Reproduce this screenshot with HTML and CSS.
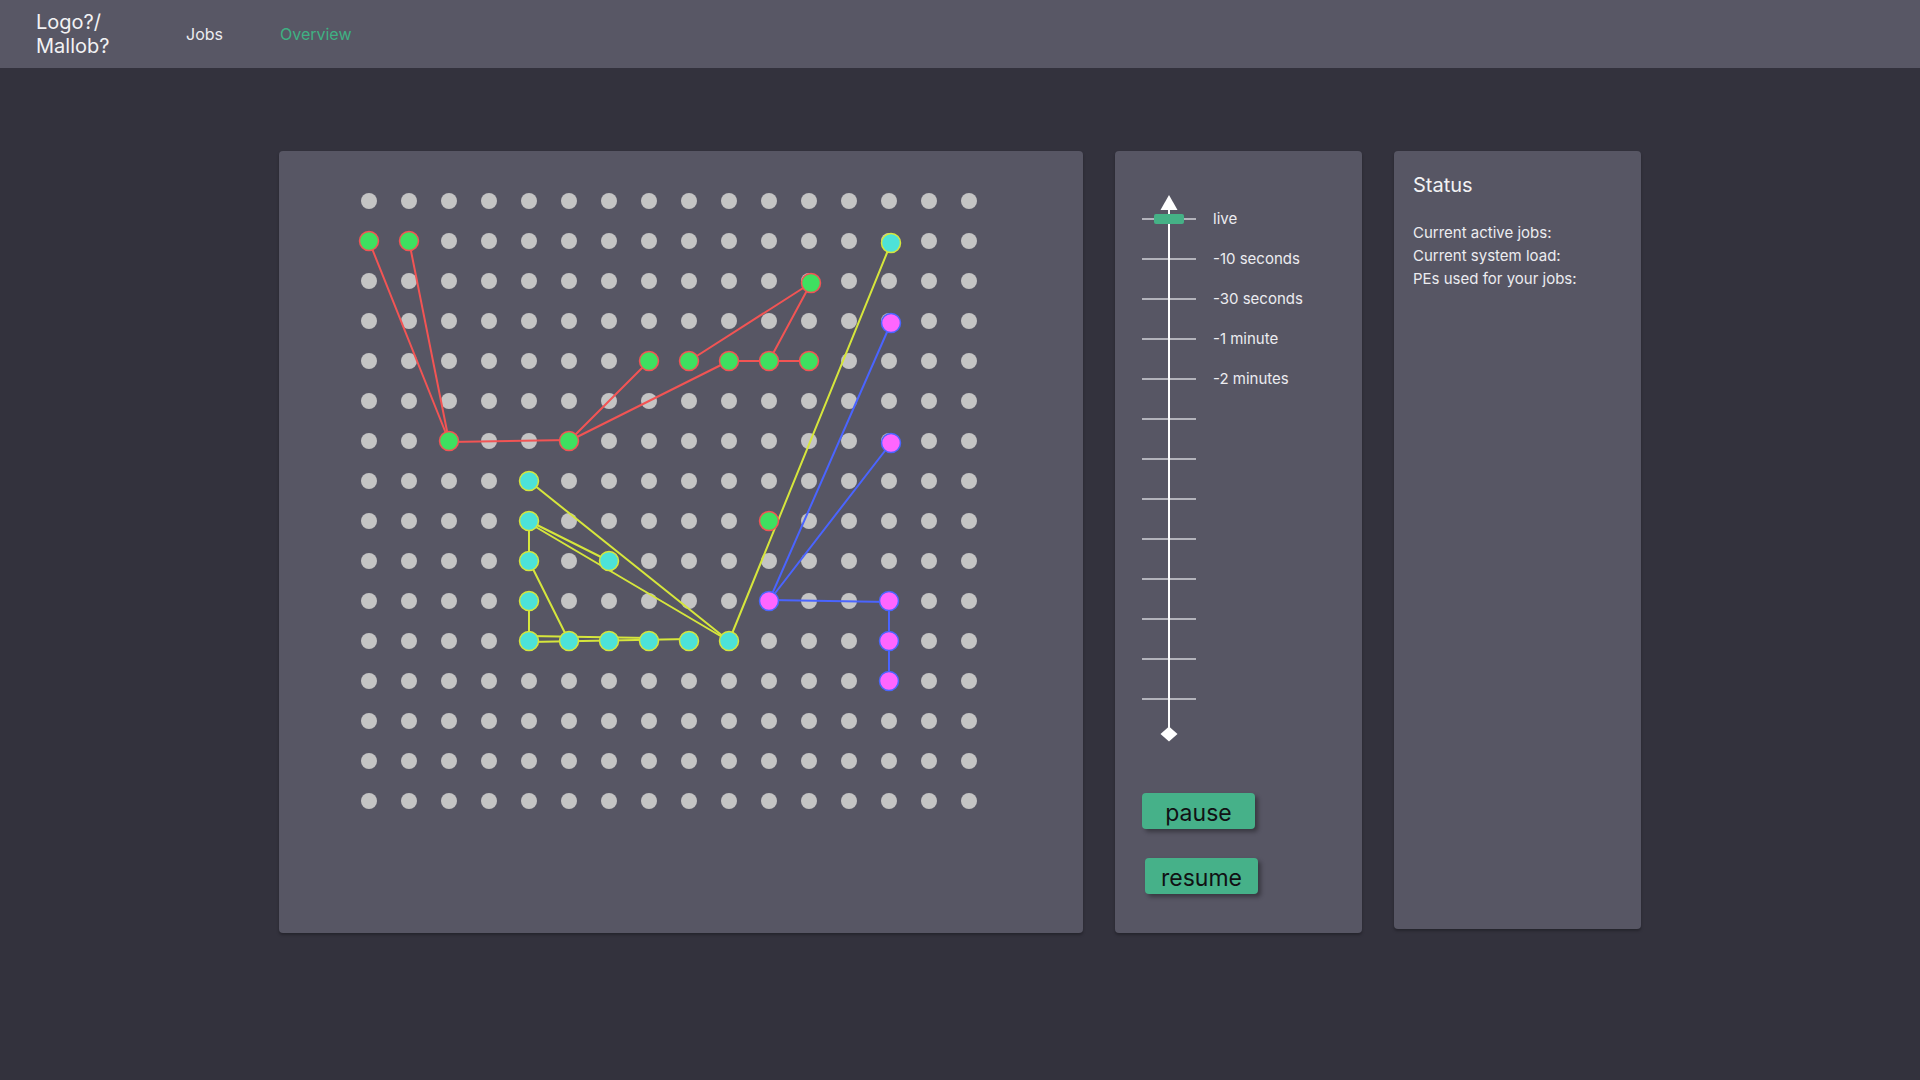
FILE: index.html
```html
<!DOCTYPE html>
<html lang="en">
<head>
<meta charset="utf-8">
<title>Overview</title>
<link rel="stylesheet" href="styles.css">
</head>
<body>
<header class="topbar">
  <div class="logo">Logo?/<br>Mallob?</div>
  <nav class="nav">
    <a class="nav-link" href="#">Jobs</a>
    <a class="nav-link active" href="#">Overview</a>
  </nav>
</header>
<main class="content">
  <section class="panel graph-panel">
    <svg class="graph" width="804" height="782" viewBox="0 0 804 782">
      <defs>
        <pattern id="dots" x="70" y="30" width="40" height="40" patternUnits="userSpaceOnUse">
          <circle cx="20" cy="20" r="8" fill="#c4c4c4"/>
        </pattern>
      </defs>
      <rect x="70" y="30" width="640" height="640" fill="url(#dots)"/>
      <g class="edges-red" stroke="#f25454" stroke-width="2" stroke-linecap="round">
        <line x1="90" y1="90" x2="170" y2="290"/>
        <line x1="130" y1="90" x2="170" y2="290"/>
        <line x1="170" y1="291" x2="290" y2="289"/>
        <line x1="290" y1="290" x2="370" y2="210"/>
        <line x1="290" y1="290" x2="450" y2="210"/>
        <line x1="410" y1="210" x2="532" y2="132"/>
        <line x1="490" y1="210" x2="532" y2="132"/>
        <line x1="450" y1="210" x2="490" y2="210"/>
        <line x1="490" y1="210" x2="530" y2="210"/>
      </g>
      <g class="edges-yellow" stroke="#d6e63c" stroke-width="2" stroke-linecap="round">
        <line x1="250" y1="330" x2="450" y2="490"/>
        <line x1="250" y1="370" x2="330" y2="410"/>
        <line x1="250" y1="372" x2="450" y2="490"/>
        <line x1="250" y1="370" x2="250" y2="410"/>
        <line x1="250" y1="410" x2="290" y2="490"/>
        <line x1="250" y1="450" x2="250" y2="490"/>
        <line x1="250" y1="485" x2="370" y2="487"/>
        <line x1="250" y1="491" x2="410" y2="488"/>
        <line x1="450" y1="490" x2="612" y2="92"/>
      </g>
      <g class="edges-blue" stroke="#4a64ff" stroke-width="2" stroke-linecap="round">
        <line x1="490" y1="450" x2="612" y2="172"/>
        <line x1="490" y1="450" x2="612" y2="292"/>
        <line x1="490" y1="449" x2="610" y2="451"/>
        <line x1="610" y1="450" x2="610" y2="530"/>
      </g>
      <g class="nodes-green" fill="#3ee060" stroke="#f25454" stroke-width="1.5">
        <circle cx="90" cy="90" r="9.5"/>
        <circle cx="130" cy="90" r="9.5"/>
        <circle cx="170" cy="290" r="9.5"/>
        <circle cx="290" cy="290" r="9.5"/>
        <circle cx="370" cy="210" r="9.5"/>
        <circle cx="410" cy="210" r="9.5"/>
        <circle cx="450" cy="210" r="9.5"/>
        <circle cx="490" cy="210" r="9.5"/>
        <circle cx="530" cy="210" r="9.5"/>
        <circle cx="532" cy="132" r="9.5"/>
        <circle cx="490" cy="370" r="9.5"/>
      </g>
      <g class="nodes-cyan" fill="#4de2d8" stroke="#d6e63c" stroke-width="1.5">
        <circle cx="250" cy="330" r="9.5"/>
        <circle cx="250" cy="370" r="9.5"/>
        <circle cx="250" cy="410" r="9.5"/>
        <circle cx="330" cy="410" r="9.5"/>
        <circle cx="250" cy="450" r="9.5"/>
        <circle cx="250" cy="490" r="9.5"/>
        <circle cx="290" cy="490" r="9.5"/>
        <circle cx="330" cy="490" r="9.5"/>
        <circle cx="370" cy="490" r="9.5"/>
        <circle cx="410" cy="490" r="9.5"/>
        <circle cx="450" cy="490" r="9.5"/>
        <circle cx="612" cy="92" r="9.5"/>
      </g>
      <g class="nodes-magenta" fill="#ff66ff" stroke="#4a64ff" stroke-width="1.5">
        <circle cx="490" cy="450" r="9.5"/>
        <circle cx="612" cy="172" r="9.5"/>
        <circle cx="612" cy="292" r="9.5"/>
        <circle cx="610" cy="450" r="9.5"/>
        <circle cx="610" cy="490" r="9.5"/>
        <circle cx="610" cy="530" r="9.5"/>
      </g>
    </svg>
  </section>

  <section class="panel time-panel">
    <div class="timeline">
      <svg class="timeline-axis" width="247" height="600" viewBox="0 0 247 600">
        <g stroke="#b3b3bb" stroke-width="2">
          <line x1="27" y1="68" x2="81" y2="68"/>
          <line x1="27" y1="108" x2="81" y2="108"/>
          <line x1="27" y1="148" x2="81" y2="148"/>
          <line x1="27" y1="188" x2="81" y2="188"/>
          <line x1="27" y1="228" x2="81" y2="228"/>
          <line x1="27" y1="268" x2="81" y2="268"/>
          <line x1="27" y1="308" x2="81" y2="308"/>
          <line x1="27" y1="348" x2="81" y2="348"/>
          <line x1="27" y1="388" x2="81" y2="388"/>
          <line x1="27" y1="428" x2="81" y2="428"/>
          <line x1="27" y1="468" x2="81" y2="468"/>
          <line x1="27" y1="508" x2="81" y2="508"/>
          <line x1="27" y1="548" x2="81" y2="548"/>
        </g>
        <line x1="54" y1="56" x2="54" y2="580" stroke="#ffffff" stroke-width="2"/>
        <polygon points="54,44 45.5,59 62.5,59" fill="#ffffff"/>
        <polygon points="54,575.5 62.5,583 54,590.5 45.5,583" fill="#ffffff"/>
        <rect x="39" y="63" width="30" height="10" rx="2" fill="#45b186"/>
      </svg>
      <ul class="time-labels">
        <li>live</li>
        <li>-10 seconds</li>
        <li>-30 seconds</li>
        <li>-1 minute</li>
        <li>-2 minutes</li>
      </ul>
    </div>
    <div class="controls">
      <button class="btn btn-pause" type="button">pause</button>
      <button class="btn btn-resume" type="button">resume</button>
    </div>
  </section>

  <section class="panel status-panel">
    <h2 class="status-title">Status</h2>
    <ul class="status-list">
      <li>Current active jobs:</li>
      <li>Current system load:</li>
      <li>PEs used for your jobs:</li>
    </ul>
  </section>
</main>
</body>
</html>
```

FILE: styles.css
```css
* {
  box-sizing: border-box;
}

html, body {
  margin: 0;
  padding: 0;
}

body {
  width: 1920px;
  height: 1080px;
  overflow: hidden;
  background: #33323d;
  font-family: Inter, "Noto Sans", "Liberation Sans", sans-serif;
  color: #ececf0;
}

.topbar {
  height: 68px;
  background: #585765;
  display: flex;
  align-items: center;
  padding-left: 36px;
}

.logo {
  width: 150px;
  font-size: 20px;
  line-height: 24px;
  color: #f2f2f4;
}

.nav {
  display: flex;
  gap: 57px;
}

.nav-link {
  font-size: 16px;
  line-height: 19px;
  color: #ececf0;
  text-decoration: none;
}

.nav-link.active {
  color: #3fb183;
}

.content {
  display: flex;
  justify-content: center;
  align-items: flex-start;
  gap: 32px;
  padding-top: 83px;
}

.panel {
  background: #575664;
  border-radius: 4px;
  box-shadow: 0 2px 3px rgba(0, 0, 0, 0.28);
}

.graph-panel {
  width: 804px;
  height: 782px;
}

.graph {
  display: block;
}

.time-panel {
  width: 247px;
  height: 782px;
  display: flex;
  flex-direction: column;
}

.timeline {
  position: relative;
  height: 600px;
}

.timeline-axis {
  position: absolute;
  left: 0;
  top: 0;
}

.time-labels {
  position: relative;
  list-style: none;
  margin: 0;
  padding: 48px 0 0 98px;
}

.time-labels li {
  height: 40px;
  line-height: 40px;
  font-size: 15px;
  color: #ececf0;
}

.controls {
  display: flex;
  flex-direction: column;
  align-items: flex-start;
  gap: 29px;
  margin-top: 42px;
}

.btn {
  width: 113px;
  height: 36px;
  border: 0;
  border-radius: 4px;
  background: #46b189;
  color: #111114;
  font-family: Inter, "Noto Sans", "Liberation Sans", sans-serif;
  font-size: 23px;
  line-height: 36px;
  padding: 2px 0 0;
  box-shadow: 3px 3px 4px rgba(0, 0, 0, 0.35);
}

.btn-pause {
  margin-left: 27px;
}

.btn-resume {
  margin-left: 30px;
}

.status-panel {
  width: 247px;
  height: 778px;
  padding: 22px 19px 0;
}

.status-title {
  margin: 0;
  font-size: 20px;
  line-height: 24px;
  font-weight: 400;
  color: #f2f2f4;
}

.status-list {
  list-style: none;
  margin: 24px 0 0;
  padding: 0;
}

.status-list li {
  font-size: 15px;
  line-height: 23px;
  color: #ececf0;
}
```
